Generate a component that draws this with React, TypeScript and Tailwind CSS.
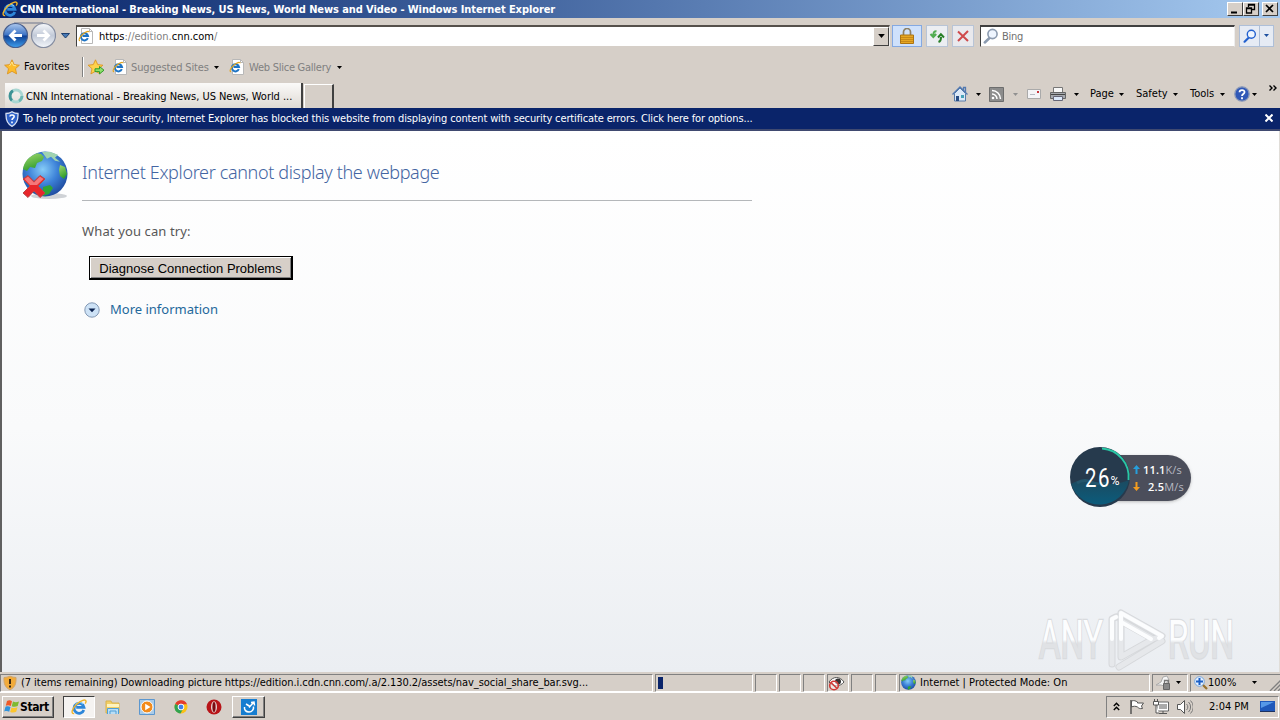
import type { ReactNode } from 'react';
import clsx from 'clsx';

interface IconProps {
  className?: string;
}

function IeIcon ({ className }: IconProps) {
  return (
    <svg viewBox="0 0 16 16" className={clsx('shrink-0', className)} fill="none">
      <path d="M12.800 11A5 5 0 1 1 13 8.400H5.200" stroke="#2d86d9" strokeWidth="2.800" />
      <path d="M4.400 5.600A4.900 4.900 0 0 1 12 5" stroke="#7ccaf8" strokeWidth="1.200" />
      <path d="M3.200 14.600C-.6 15 1 9.600 5.600 5.200 9.800 1.200 14.800-.2 15 2.200c.1.900-.3 1.700-.8 2.500" stroke="#f0b429" strokeWidth="1.400" />
    </svg>
  );
}

function PageIcon ({ className }: IconProps) {
  return (
    <svg viewBox="0 0 16 16" className={clsx('shrink-0 w-4 h-4', className)} fill="none">
      <path d="M3.500.5h8l3 3v12h-11z" fill="#fff" stroke="#b8b8b8" />
      <path d="M11.500.5v3h3" stroke="#b8b8b8" />
      <path d="M9.800 10.200A3.600 3.600 0 1 1 10 8H4.500" stroke="#1e74c4" strokeWidth="2" />
      <path d="M2 12.800C-.2 12.400 2 8.500 5 6c2.800-2.400 6-3.400 6.200-1.800" stroke="#e3a51d" strokeWidth="1.100" />
    </svg>
  );
}

function Star ({ className }: IconProps) {
  return (
    <svg viewBox="0 0 16 16" className={clsx('shrink-0 w-4 h-4', className)}>
      <path d="M8 .8l2.200 4.800 5.200.6-3.900 3.500 1.100 5.200L8 12.300l-4.600 2.600 1.100-5.200L.6 6.200l5.200-.6z" fill="#fdbc2c" stroke="#d98f1a" strokeWidth=".8" />
      <path d="M5.500 7L8 3l1.300 3.400 2.700.4" fill="none" stroke="#ffe58e" />
    </svg>
  );
}

function AddStar () {
  return (
    <svg viewBox="0 0 17 16" className="shrink-0 w-[17px] h-4">
      <path d="M7.500 .8l2.200 4.800 5.200.6-3.900 3.500 1.100 5.200-4.600-2.600-4.600 2.600 1.100-5.200L.1 6.200l5.200-.6z" fill="#fdd24c" stroke="#d98f1a" strokeWidth=".8" />
      <path d="M7 9.800h4.500V7.500l4.500 3.700-4.500 3.700v-2.300H7z" fill="#8fe06a" stroke="#2f9a2a" />
    </svg>
  );
}

function Caret ({ className }: IconProps) {
  return (
    <svg viewBox="0 0 5 3" className={clsx('shrink-0 fill-current', className ?? '', !className?.includes('w-[7px]') && 'w-[5px] h-[3px]')}>
      <path d="M0 0h5L2.500 3z" />
    </svg>
  );
}

function NavButtons () {
  return (
    <svg viewBox="0 0 56 28" className="shrink-0 w-14 h-7">
      <defs>
        <linearGradient id="back" x2="0" y2="1">
          <stop stopColor="#aec9ee" />
          <stop offset=".48" stopColor="#3b72c4" />
          <stop offset=".52" stopColor="#0d3f94" />
          <stop offset="1" stopColor="#3fa0ee" />
        </linearGradient>
        <linearGradient id="fwd" x2="0" y2="1">
          <stop stopColor="#f7f9fc" />
          <stop offset=".5" stopColor="#c2cad8" />
          <stop offset="1" stopColor="#f4f7fb" />
        </linearGradient>
      </defs>
      <path d="M14 1h29" stroke="#8f93a1" strokeWidth="1.500" />
      <circle cx="15.500" cy="13.500" r="12" fill="url(#back)" stroke="#485f8e" strokeWidth="1.200" />
      <path d="M22 13.500H10.500M15.500 8.500l-5 5 5 5" fill="none" stroke="#fff" strokeWidth="2.800" />
      <circle cx="43.500" cy="13.500" r="12" fill="url(#fwd)" stroke="#848ca0" strokeWidth="1.200" />
      <path d="M37 13.500h11.500M43.500 8.500l5 5-5 5" fill="none" stroke="#fff" strokeWidth="2.800" />
    </svg>
  );
}

function Shield ({ className }: IconProps) {
  return (
    <svg viewBox="0 0 14 16" className={clsx('shrink-0 w-[14px] h-4', className)}>
      <path d="M7 .7c2 1.300 4 1.800 6 1.800.3 6-1 10.500-6 12.800C2 13 .7 8.500 1 2.500c2 0 4-.5 6-1.800z" fill="#2e62c9" stroke="#d5dff2" strokeWidth="1.300" />
      <path d="M4.900 5.500c.2-2.200 4.400-2 4.200.2-.1 1.500-2.100 1.600-2.100 3.400M7 10.500v1.800" fill="none" stroke="#fff" strokeWidth="1.600" />
    </svg>
  );
}

function Globe ({ className }: IconProps) {
  return (
    <svg viewBox="0 0 46 46" className={clsx('shrink-0', className)}>
      <defs>
        <radialGradient id="sea" cx=".45" cy=".4" r=".65">
          <stop stopColor="#86ccf7" />
          <stop offset=".5" stopColor="#3d82d8" />
          <stop offset="1" stopColor="#1b4599" />
        </radialGradient>
        <linearGradient id="land" x2=".4" y2="1">
          <stop stopColor="#a5db70" />
          <stop offset="1" stopColor="#2f9c2b" />
        </linearGradient>
      </defs>
      <circle cx="23" cy="23" r="22.500" fill="url(#sea)" />
      <path d="M15 2.200C7 5 2 11 1 18l4 2 3-4 5 1 2-5 5-2 2-4-3-3z" fill="url(#land)" />
      <path d="M20 1l8-.2 8 3-3 3 5 4-5-1-4-4-4 2z" fill="#9fd3b0" />
      <path d="M38 14l5 2 2 7-3 5-4-3-1-6z" fill="url(#land)" />
      <path d="M21 36l7-2 3 3-4 6-6 2z" fill="#2fa535" />
    </svg>
  );
}

function BrokenGlobe () {
  return (
    <svg viewBox="0 0 48 50" className="shrink-0 w-12 h-[50px]">
      <ellipse cx="28" cy="46" rx="18" ry="3" fill="#cfd2d6" />
      <svg x="1" y="1" width="46" height="46">
        <Globe />
      </svg>
      <path d="M2 29l5-3.500 6 6 6-6 5 3.500-7 7 7 7-5 4.500-6-6.500-6 6.500-5-4.500 7-7z" fill="#e8262b" stroke="#b5484a" />
      <path d="M3.500 29l3.500-2.500 6 6 6-6 3.500 2.500-6.500 6H9z" fill="#f5777a" />
    </svg>
  );
}

function Magnifier ({ className, color }: IconProps & { color: string }) {
  return (
    <svg viewBox="0 0 16 16" className={clsx('shrink-0', className)} fill="none">
      <path d="M7 9.500L1.800 14.500" stroke={color} strokeWidth="2.500" strokeLinecap="round" />
      <circle cx="9.500" cy="6" r="4.600" fill="#eef5ff" stroke={color} strokeWidth="1.600" />
    </svg>
  );
}

function WindowButton ({ children, className }: { children: ReactNode; className?: string }) {
  return (
    <button className={clsx('w-4 h-[14px] bg-[#d6cfc8] border border-t-white border-l-white border-r-[#404040] border-b-[#404040]', className)}>
      <svg viewBox="0 0 14 12" className="w-[14px] h-3" fill="none" stroke="#000">
        {children}
      </svg>
    </button>
  );
}

function TitleBar () {
  return (
    <header className="flex items-center h-[18px] pl-0.5 pr-[2px] bg-linear-to-r from-[#0a246a] to-[#a6caf0]">
      <IeIcon className="w-4 h-4 mr-[2px]" />
      <h1 className="grow pt-px text-white font-bold text-[11px] leading-[17px] tracking-[-0.09px] whitespace-nowrap">
        CNN International - Breaking News, US News, World News and Video - Windows Internet Explorer
      </h1>
      <WindowButton>
        <path d="M3 9.500h6" strokeWidth="2" />
      </WindowButton>
      <WindowButton>
        <path d="M4.500 4V1.500h6v5H8M4 2h7M2.500 5v5h5V5zM2 5.500h6" strokeWidth="1.300" />
      </WindowButton>
      <WindowButton className="ml-[3px]">
        <path d="M3 2l7 7M10 2L3 9" strokeWidth="1.700" />
      </WindowButton>
    </header>
  );
}

function AddressBar () {
  return (
    <section className="flex items-center h-[35px]">
      <NavButtons />
      <svg viewBox="0 0 9 6" className="w-[9px] h-1.5 ml-[5px] mr-[6px]">
        <path d="M.5.500h8l-4 4.500z" fill="#4779b5" stroke="#1e3f6e" />
      </svg>
      <div className="flex items-center w-[814px] h-[22px] bg-white border border-t-2 border-[#404040] border-t-[#55504b] border-b-[#d6cfc8] border-r-[#eee]">
        <PageIcon className="ml-px" />
        <span className="grow ml-[5px] pt-px text-[#808080]">
          <span className="text-black">https</span>://edition.<span className="text-black">cnn.com</span>/
        </span>
        <span className="flex items-center justify-center w-4 h-[19px] bg-[#d6cfc8] border border-t-white border-l-white border-r-[#404040] border-b-[#404040]">
          <Caret className="w-[7px] h-1" />
        </span>
      </div>
      <span className="flex items-center justify-center w-[30px] h-[22px] ml-0.5 bg-[#cfe1fb] border border-[#84a9e2]">
        <svg viewBox="0 0 14 16" className="w-[14px] h-4">
          <path d="M3.500 8V4a3.500 3.500 0 0 1 7 0v4" fill="none" stroke="#8d8065" strokeWidth="1.700" />
          <path d="M.5 7h13v8.500H.5z" fill="#e7a722" stroke="#ac7412" />
          <path d="M1 9.500h12M1 11.500h12M1 13.500h12" stroke="#b97d16" strokeWidth=".7" />
        </svg>
      </span>
      <span className="flex items-center justify-center w-[22px] h-[22px] ml-1 bg-[#eceef2] border border-[#b8c4d6]">
        <svg viewBox="0 0 16 16" className="w-4 h-4" fill="none" strokeWidth="2">
          <path d="M7.500 3.200C5.200 3 4.400 4.500 4.300 7M1.500 6l2.800 3 2.900-3" stroke="#52ad52" />
          <path d="M9.500 14c2.200-.8 2.600-2.400 2.500-5M9 9.500l2.900-3.200L15 9.500" stroke="#277f27" />
        </svg>
      </span>
      <span className="flex items-center justify-center w-[22px] h-[22px] ml-1 bg-[#e9e9ed] border border-[#b8c4d6]">
        <svg viewBox="0 0 12 12" className="w-3 h-3">
          <path d="M1 1.500l10 9.500M11 1L1 11" stroke="#cf4a4c" strokeWidth="2" />
        </svg>
      </span>
      <div className="flex items-center w-[255px] h-[22px] ml-[6px] bg-white border border-t-2 border-[#404040] border-b-[#d6cfc8] border-r-[#eee]">
        <Magnifier className="w-4 h-4 ml-0.5" color="#8c9bb0" />
        <span className="ml-[3px] pt-px text-[#707070] tracking-[-0.3px]">Bing</span>
      </div>
      <div className="flex w-[35px] h-[22px] ml-1 bg-[#e6ebf4] border border-[#aebfd8]">
        <span className="flex items-center justify-center w-5 border-r border-[#aebfd8]">
          <Magnifier className="w-[14px] h-[14px]" color="#2260cf" />
        </span>
        <span className="flex grow items-center justify-center text-[#1d4f9f]">
          <Caret />
        </span>
      </div>
    </section>
  );
}

function FavoritesBar () {
  return (
    <section className="flex items-center h-[28px] pl-[4px]">
      <Star />
      <span className="w-[50px] ml-[4px] tracking-[0.1px] whitespace-nowrap">Favorites</span>
      <span className="w-0.5 h-5 ml-[8px] mr-[4px] border-l border-[#808080] border-r border-r-white" />
      <AddStar />
      <PageIcon className="ml-[7px]" />
      <span className="w-[80px] ml-[3px] pt-px text-[#808080] tracking-[-0.15px] whitespace-nowrap">Suggested Sites</span>
      <Caret className="ml-[3px]" />
      <PageIcon className="ml-[10px]" />
      <span className="w-[84px] ml-[4px] pt-px text-[#808080] tracking-[-0.25px] whitespace-nowrap">Web Slice Gallery</span>
      <Caret className="ml-1" />
    </section>
  );
}

function CommandBar () {
  return (
    <nav className="flex items-center h-[22px] ml-auto pr-[3px] whitespace-nowrap">
      <svg viewBox="0 0 16 16" className="w-4 h-4">
        <path d="M2.500 7.500V15h11V7.500L8 2z" fill="#dce9f7" stroke="#587ba8" />
        <path d="M.5 8.500L8 1l7.500 7.500M11.500 4V1.500h2v5" fill="none" stroke="#5279b0" strokeWidth="1.300" />
        <path d="M4 10h3v5H4z" fill="#284d84" />
        <path d="M9 9h3v3H9z" fill="#47a2b8" />
      </svg>
      <Caret className="ml-2 mr-[8px]" />
      <svg viewBox="0 0 15 15" className="w-[15px] h-[15px]" fill="none">
        <path d="M.5.500h14v14H.5z" fill="#8c8c8c" stroke="#6d6d6d" />
        <path d="M3 7a5 5 0 0 1 5 5M3 3.500A8.500 8.500 0 0 1 11.500 12" stroke="#fff" strokeWidth="1.500" />
        <circle cx="4" cy="11" r="1.300" fill="#fff" />
      </svg>
      <Caret className="ml-[9px] mr-[9px] text-[#909090]" />
      <svg viewBox="0 0 14 10" className="w-[14px] h-2.5">
        <path d="M.5.500h13v9H.5z" fill="#f4f4f7" stroke="#aaa" />
        <path d="M3 5.500h5" stroke="#b5b9c2" />
        <path d="M10 2h2v2h-2z" fill="#c6343b" />
      </svg>
      <svg viewBox="0 0 16 16" className="w-4 h-4 ml-[9px]">
        <path d="M3.500 7V1.500h9V7" fill="#f8f8f8" stroke="#777" />
        <path d="M.5 6.500h15v6H.5z" fill="#a6a9ae" stroke="#666" />
        <path d="M1 8.500h14" stroke="#444" />
        <path d="M3.500 10.500h9v4h-9z" fill="#dce9fa" stroke="#667" />
      </svg>
      <Caret className="ml-2 mr-[11px]" />
      <span className="w-[25px]">Page</span>
      <Caret className="ml-1 mr-[12px]" />
      <span className="w-[33px]">Safety</span>
      <Caret className="ml-1 mr-[12px]" />
      <span className="w-[26px]">Tools</span>
      <Caret className="ml-1 mr-[9px]" />
      <svg viewBox="0 0 16 16" className="w-4 h-4">
        <circle cx="8" cy="8" r="7.200" fill="#3159b7" stroke="#8b99b8" strokeWidth="1.300" />
        <path d="M5.500 6.200c.2-3 5.200-2.700 5 0C10.400 8 8 8 8 10M8 11.300v1.900" fill="none" stroke="#fff" strokeWidth="1.800" />
      </svg>
      <Caret className="ml-[2px]" />
      <svg viewBox="0 0 8 6" className="w-2 h-1.5 ml-[12px] mb-[13px]" fill="none" stroke="#000" strokeWidth="1.400">
        <path d="M.5.500L3 3 .5 5.500M4.500.500L7 3 4.500 5.500" />
      </svg>
    </nav>
  );
}

function TabRow () {
  return (
    <section className="flex h-[27px] pt-[2px]">
      <div className="flex items-center w-[298px] h-[25px] ml-[5px] pl-[3px] bg-linear-to-b from-[#fbfaf9] to-[#dfdad4] border-r-2 border-[#404040]">
        <svg viewBox="0 0 16 16" className="w-4 h-4 shrink-0" fill="none" strokeWidth="2.800">
          <circle cx="8" cy="8" r="6" stroke="#a9d6d2" />
          <path d="M5 2.800a6 6 0 0 0-1 9.600" stroke="#3d9295" />
          <path d="M11 13a6 6 0 0 0 3-5" stroke="#6cb7b3" />
        </svg>
        <span className="ml-[2px] mt-[2px] tracking-[-0.04px] whitespace-nowrap">CNN International - Breaking News, US News, World ...</span>
      </div>
      <div className="w-[30px] h-6 mt-px ml-px border border-white border-r-2 border-r-[#404040] border-b-0" />
      <CommandBar />
    </section>
  );
}

function InfoBar () {
  return (
    <section className="flex items-center h-[23px] pl-[5px] pr-[7px] bg-[#0a246a] text-white border-b-2 border-[#404a70]">
      <Shield />
      <span className="grow ml-[4px] pt-px tracking-[-0.13px] whitespace-nowrap">
        To help protect your security, Internet Explorer has blocked this website from displaying content with security certificate errors. Click here for options...
      </span>
      <svg viewBox="0 0 8 8" className="w-2 h-2 mb-px">
        <path d="M.5.500l7 7M7.500.500l-7 7" stroke="#fff" strokeWidth="2" />
      </svg>
    </section>
  );
}

function ErrorPage () {
  return (
    <main className="relative flex items-start h-[541px] pl-[19px] pt-[19px] bg-linear-to-b from-white via-[#f9fafb] via-55% to-[#ebeef2] border-l-2 border-[#606060] border-r border-r-[#e0ddd8]">
      <BrokenGlobe />
      <section className="w-[670px] ml-[13px] font-['Noto_Sans',sans-serif]">
        <h2 className="h-[51px] pt-[8px] border-b border-[#b4b7ba] text-[#4465a2] text-[18px] leading-[29px] font-light tracking-[-0.35px] whitespace-nowrap">
          Internet Explorer cannot display the webpage
        </h2>
        <p className="mt-[20px] text-[13px] leading-5 tracking-[0.13px] text-[#575757]">What you can try:</p>
        <button className="block w-[204px] h-[24px] mt-[15px] ml-[7px] bg-[#d6cfc8] border border-black border-r-2 border-b-2 shadow-[inset_1px_1px_#fff,inset_-1px_-1px_#808080] font-['Liberation_Sans',sans-serif] text-[13px] leading-[23px] tracking-[-0.02px] whitespace-nowrap">
          Diagnose Connection Problems
        </button>
        <a className="flex items-center mt-[20px] ml-[2px] h-5 text-[13px] text-[#23689b]">
          <svg viewBox="0 0 16 16" className="w-4 h-4">
            <circle cx="8" cy="8" r="7.200" fill="#cde2f6" stroke="#8298b4" />
            <path d="M4.500 6.500h7L8 10.200z" fill="#0b2350" />
          </svg>
          <span className="ml-[10px] mb-0.5">More information</span>
        </a>
      </section>
      <SpeedWidget />
      <Watermark />
    </main>
  );
}

function SpeedWidget () {
  return (
    <aside className="absolute left-[1067px] top-[315px] flex items-center w-[122px] h-[62px] font-['Open_Sans',sans-serif]">
      <div className="absolute left-8 top-[9px] flex flex-col justify-center w-[90px] h-[46px] pl-[32px] rounded-r-full bg-[#4b4e5b] shadow-[0_1px_3px_#8888] text-[11px] leading-[17px] text-[#b8bac2]">
        <span className="flex items-center">
          <svg viewBox="0 0 7 9" className="w-[7px] h-[9px] mr-[3px]"><path d="M3.500 0L7 4H4.500v5h-2V4H0z" fill="#269edb" /></svg>
          <span className="tracking-[0.15px]"><b className="font-semibold text-white">11.1</b>K/s</span>
        </span>
        <span className="flex items-center">
          <svg viewBox="0 0 7 9" className="w-[7px] h-[9px] mr-[8px]"><path d="M3.500 9L7 5H4.500V0h-2v5H0z" fill="#f39c1f" /></svg>
          <span className="tracking-[0.2px]"><b className="font-semibold text-white">2.5</b>M/s</span>
        </span>
      </div>
      <svg viewBox="0 0 62 62" className="relative w-[62px] h-[62px]">
        <defs>
          <linearGradient id="water" x2="0" y2="1">
            <stop stopColor="#1b4a60" />
            <stop offset="1" stopColor="#0b5c7c" />
          </linearGradient>
        </defs>
        <circle cx="31" cy="31" r="30" fill="#263a4d" />
        <path d="M2 38c8-5 17-3 26-1s20 2 32-3a30 30 0 0 1-58 4z" fill="url(#water)" />
        <path d="M8 37c6-4 10-3 14-1s12 3 18 0" fill="none" stroke="#24566c" strokeWidth="3" />
        <path d="M33 2.500A28.500 28.500 0 0 1 59.500 34" fill="none" stroke="#29c7a5" strokeWidth="1.800" />
        <text x="16" y="41" textLength="11.500" lengthAdjust="spacingAndGlyphs" fill="#fff" fontSize="26" fontFamily="Roboto">2</text>
        <text x="29" y="41" textLength="11.500" lengthAdjust="spacingAndGlyphs" fill="#fff" fontSize="26" fontFamily="Roboto">6</text>
        <text x="41.500" y="39" textLength="9" lengthAdjust="spacingAndGlyphs" fill="#fff" fontSize="12" fontFamily="Roboto">%</text>
      </svg>
    </aside>
  );
}

function Watermark () {
  return (
    <svg viewBox="0 0 210 70" className="absolute left-[1033px] top-[474px] w-[210px] h-[70px] overflow-visible">
      <defs>
        <linearGradient id="mark" gradientUnits="userSpaceOnUse" x1="0" y1="14" x2="0" y2="54">
          <stop offset=".52" stopColor="#fcfdfe" />
          <stop offset=".6" stopColor="#e0e2e5" />
        </linearGradient>
      </defs>
      <g fill="url(#mark)" stroke="#d9dbde" strokeWidth="2.500" paintOrder="stroke" fontFamily="Roboto" fontSize="53">
        <text x="4" y="53" textLength="64" lengthAdjust="spacingAndGlyphs">ANY</text>
        <text x="133" y="53" textLength="66" lengthAdjust="spacingAndGlyphs">RUN</text>
      </g>
      <g fill="none" strokeLinejoin="round" strokeLinecap="round">
        <path d="M77 59V14l4-2M86 8v44l32-18-32-18M86 8l41 23-9 3M84 62l43-26" stroke="#d6d8db" strokeWidth="7" />
        <path d="M77 59V14l4-2M86 8v44l32-18-32-18M86 8l41 23-9 3M84 62l43-26" stroke="#e6e8eb" strokeWidth="5" />
        <path d="M77 34V14l4-2M86 34V8l41 23-3 2M86 17l30 17" stroke="#fcfdfe" strokeWidth="4" />
      </g>
    </svg>
  );
}

function Cell ({ children, className }: { children?: ReactNode; className: string }) {
  return (
    <span className={clsx('flex items-center shrink-0 h-[18px] border border-t-[#808080] border-l-[#808080] border-r-white border-b-white whitespace-nowrap', className)}>
      {children}
    </span>
  );
}

function StatusBar () {
  return (
    <footer className="flex items-center h-[21px] pt-px border-b border-white">
      <Cell className="w-[653px] pl-[2px]">
        <svg viewBox="0 0 14 16" className="w-[14px] h-4">
          <path d="M7 1.200c2 .8 4 1.300 6 1.300.3 6-1 10-6 12.300C2 12.500.7 8.500 1 2.500c2 0 4-.5 6-1.300z" fill="#f2ab3a" stroke="#d0a468" />
          <path d="M7 4v5M7 10.500v2" stroke="#3b2a14" strokeWidth="2" />
        </svg>
        <span className="ml-[4px] pt-px tracking-[-0.06px]">
          (7 items remaining) Downloading picture https://edition.i.cdn.cnn.com/.a/2.130.2/assets/nav_social_share_bar.svg...
        </span>
      </Cell>
      <Cell className="w-[98px] ml-[2px] pl-0.5">
        <span className="w-[5px] h-3 bg-[#0a246a]" />
      </Cell>
      <Cell className="w-[22px] ml-[2px]" />
      <Cell className="w-[22px] ml-[2px]" />
      <Cell className="w-[22px] ml-[2px]" />
      <Cell className="w-[22px] ml-[2px]">
        <svg viewBox="0 0 18 16" className="shrink-0 w-[18px] h-4" fill="none">
          <path d="M1 7c4-6 11-6 15 0-4 5-11 5-15 0z" fill="#fff" stroke="#555" />
          <circle cx="10" cy="6.500" r="3" fill="#333" />
          <circle cx="6" cy="10.500" r="4.300" fill="#fff8" stroke="#d03a36" strokeWidth="1.600" />
          <path d="M3 7.500l6 6" stroke="#d03a36" strokeWidth="1.600" />
        </svg>
      </Cell>
      <Cell className="w-[22px] ml-[2px]" />
      <Cell className="w-[22px] ml-[2px]" />
      <Cell className="w-[251px] ml-[2px] pl-px">
        <Globe className="w-[15px] h-[15px]" />
        <span className="ml-[4px] pt-px tracking-[0.02px]">Internet | Protected Mode: On</span>
      </Cell>
      <Cell className="w-[36px] ml-[2px] pl-[3px]">
        <svg viewBox="0 0 16 16" className="w-4 h-4">
          <path d="M0 10l5-3 2-5 4-1 2 4-5 6-3-1z" fill="#f6f6f6" stroke="#aaa" />
          <path d="M7.500 8.500h6v6h-6z" fill="#888" stroke="#666" />
          <path d="M8.500 8V5.500h4V8" fill="none" stroke="#777" strokeWidth="1.300" />
        </svg>
        <Caret className="ml-1" />
      </Cell>
      <Cell className="w-[91px] ml-[2px] pl-[3px] border-r-0">
        <svg viewBox="0 0 14 14" className="w-[14px] h-[14px]">
          <path d="M8 8l5 5" stroke="#98722e" strokeWidth="2.300" />
          <circle cx="5.500" cy="5.500" r="4.800" fill="#e5f1ff" stroke="#76a5dd" />
          <path d="M5.500 2v7M2 5.500h7" stroke="#1b5fc6" strokeWidth="2" />
        </svg>
        <span className="w-[30px] pt-px">100%</span>
        <Caret className="ml-[14px]" />
        <svg viewBox="0 0 12 12" className="w-3 h-3 ml-3 mt-1" stroke="#808080" strokeWidth="1.300">
          <path d="M1 12L12 1M5 12l7-7M9 12l3-3" />
        </svg>
      </Cell>
    </footer>
  );
}

function TaskBar () {
  return (
    <nav className="flex items-center h-[27px] pl-[2px]">
      <button className="flex items-center w-[52px] h-[22px] pl-px bg-[#d6cfc8] border border-t-white border-l-white border-r-[#404040] border-b-[#404040] shadow-[inset_-1px_-1px_#808080] font-bold text-[12px] tracking-[-0.4px]">
        <svg viewBox="0 0 16 16" className="w-4 h-4 shrink-0">
          <path d="M3 2c2-1 3.500-.8 5 .2L6.800 7C5 6 3.500 6 1.800 6.700z" fill="#ef5a28" />
          <path d="M9 2.600c2 1 4 .8 6-.1L13.700 7c-2 1-4 1-6 .2z" fill="#7fba31" />
          <path d="M1.500 7.700c2-.7 3.500-.5 5 .3l-1.300 4.800c-1.500-.9-3-1-5-.3z" fill="#2f93dc" />
          <path d="M7.500 8.400c2 .9 4 .7 6-.2l-1.300 4.600c-2 1-4 .9-6 .1z" fill="#fcc62e" />
        </svg>
        Start
      </button>
      <span className="flex items-center justify-center w-[32px] h-[22px] ml-[9px] bg-[#f5f3f1] border border-t-[#404040] border-l-[#404040] border-r-white border-b-white">
        <IeIcon className="w-4 h-4" />
      </span>
      <svg viewBox="0 0 16 16" className="w-4 h-4 ml-[10px]">
        <path d="M1 2h5l1 2h7v10H1z" fill="#f2cf66" stroke="#d9b24c" />
        <path d="M2 5h12v3H2z" fill="#fff3bd" />
        <path d="M2.500 15V9.500h11V15M5 15v-3h6v3" fill="#b9ddf5" stroke="#4f9fd6" />
      </svg>
      <svg viewBox="0 0 16 16" className="w-4 h-4 ml-[18px]">
        <path d="M.5.500h15v15H.5z" fill="#a9cbe8" stroke="#5c97cf" />
        <circle cx="8" cy="8" r="6" fill="#f28b1c" stroke="#fff" />
        <path d="M6.200 4.700v6.600L11.500 8z" fill="#fff" />
      </svg>
      <svg viewBox="0 0 14 14" className="w-[14px] h-[14px] ml-[19px]">
        <circle cx="7" cy="7" r="6.500" fill="#fbc116" />
        <path d="M7 7L1.200 4A6.500 6.500 0 0 1 13 4.300H7z" fill="#e33b2e" />
        <path d="M7 7L1.200 4A6.500 6.500 0 0 0 6.500 13.500L9 9z" fill="#31a350" />
        <circle cx="7" cy="7" r="2.900" fill="#3f7fe8" stroke="#fff" />
      </svg>
      <svg viewBox="0 0 16 16" className="w-4 h-4 ml-[18px]">
        <circle cx="8" cy="8" r="7.500" fill="#b81418" />
        <ellipse cx="8" cy="8" rx="3" ry="5.800" fill="#e8d4d2" />
        <ellipse cx="8" cy="8" rx="1.600" ry="5" fill="#7b0a10" />
      </svg>
      <span className="flex items-center justify-center w-[33px] h-[22px] ml-[10px] border border-t-white border-l-white border-r-[#404040] border-b-[#404040] shadow-[inset_-1px_-1px_#808080]">
        <svg viewBox="0 0 16 16" className="w-4 h-4">
          <path d="M0 0h16v16H0z" fill="#167dd0" />
          <path d="M3.500 8C3 11 5 13 8 13s5-2.500 4.500-5.500M5 5l4 2.500M10 3.500l3-.5.500 3.500M8 8.500l4.500-5" fill="none" stroke="#fff" strokeWidth="1.500" />
        </svg>
      </span>
      <div className="flex items-center w-[173px] h-[22px] ml-auto mr-[1px] pl-[6px] border border-t-[#808080] border-l-[#808080] border-r-white border-b-white">
        <svg viewBox="0 0 7 9" className="w-[7px] h-[9px]" fill="none" stroke="#000" strokeWidth="1.400">
          <path d="M.8 4l2.700-2.700L6.200 4M.8 8l2.700-2.700L6.200 8" />
        </svg>
        <svg viewBox="0 0 16 16" className="w-4 h-4 ml-[9px]">
          <path d="M2 1v14" stroke="#555" strokeWidth="1.500" />
          <path d="M2.500 2c3-1 4 0 6 1v1h6l-2 3 1 2.500c-3 .5-4-.5-5-1.500-2-1-4-1-6 0z" fill="#fff" stroke="#555" />
        </svg>
        <svg viewBox="0 0 16 16" className="w-4 h-4 ml-2" fill="none" stroke="#555">
          <path d="M4 3h11.500v9H4z" fill="#fff" stroke="#666" />
          <path d="M6 5h8v5H6z" fill="#aaa" stroke="none" />
          <path d="M6 14.500h8M10 12v2" />
          <path d="M.5 2.500h5V6h-5zM1.500 2.500V0M4.500 2.500V0M3 6v8h3" fill="#fff" />
        </svg>
        <svg viewBox="0 0 16 16" className="w-4 h-4 ml-2" fill="none" stroke="#555">
          <path d="M.5 5.500h3l4-4v13l-4-4h-3z" fill="#fff" />
          <path d="M9.500 5a4 4 0 0 1 0 6M11.500 3a7 7 0 0 1 0 10M13.500 1.500a9 9 0 0 1 0 13" stroke="#777" />
        </svg>
        <span className="w-[41px] ml-[16px] pt-px whitespace-nowrap">2:04 PM</span>
        <svg viewBox="0 0 15 13" className="w-[15px] h-[13px] ml-[10px]">
          <path d="M0 1h15v10H0z" fill="#1f58ba" />
          <path d="M1 2h13L1 8z" fill="#5698e8" />
          <path d="M0 11.500h15" stroke="#1d3260" />
        </svg>
      </div>
    </nav>
  );
}

function App () {
  return (
    <div className="flex flex-col w-[1280px] h-[720px] overflow-hidden bg-[#d6cfc8] text-black font-['DejaVu_Sans_Condensed','DejaVu_Sans',sans-serif] text-[11px] leading-[14px]">
      <TitleBar />
      <AddressBar />
      <FavoritesBar />
      <TabRow />
      <InfoBar />
      <ErrorPage />
      <StatusBar />
      <TaskBar />
    </div>
  );
}

export default App;
